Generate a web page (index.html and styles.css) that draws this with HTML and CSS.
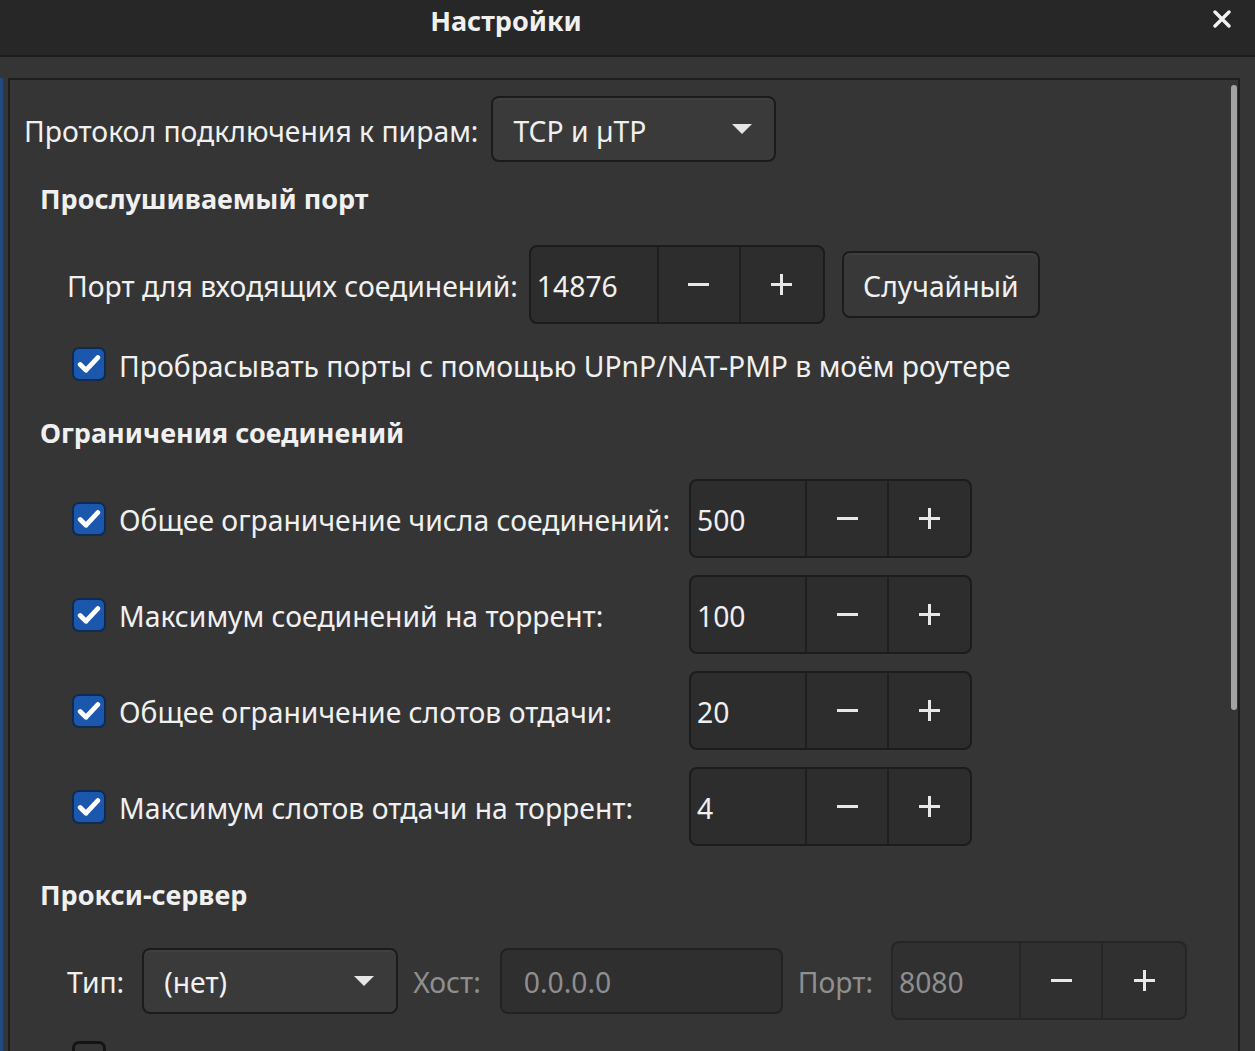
FILE: index.html
```html
<!DOCTYPE html>
<html lang="ru">
<head>
<meta charset="utf-8">
<title>Настройки</title>
<link rel="stylesheet" href="styles.css">
</head>
<body>
<div class="window">
  <header class="titlebar">
    <div class="title">Настройки</div>
    <button class="close" aria-label="Закрыть">
      <svg width="18" height="18" viewBox="0 0 18 18"><path d="M2 2 L16 16 M16 2 L2 16" stroke="#f2f2f2" stroke-width="3.4" stroke-linecap="round"/></svg>
    </button>
  </header>
  <div class="body">
    <div class="stripe"></div>
    <div class="frame">
      <div class="content">
        <div class="row r-proto">
          <span class="label">Протокол подключения к пирам:</span>
          <div class="combo combo-proto"><span>TCP и µTP</span><svg class="arrow" width="20" height="10" viewBox="0 0 20 10"><path d="M0 0 H20 L10 10 Z" fill="#e6e6e6"/></svg></div>
        </div>

        <h2 class="heading h1">Прослушиваемый порт</h2>

        <div class="row r-port">
          <span class="label">Порт для входящих соединений:</span>
          <div class="spin spin-wide">
            <span class="spin-entry">14876</span>
            <span class="spin-btn minus"><i class="ico-minus"></i></span>
            <span class="spin-btn plus"><i class="ico-plus"></i></span>
          </div>
          <button class="btn">Случайный</button>
        </div>

        <div class="row r-check">
          <span class="check on"><svg width="24" height="20" viewBox="0 0 24 20"><path d="M3.2 10.5 L9 16.2 L20.8 3.6" fill="none" stroke="#fff" stroke-width="4.8" stroke-linecap="round" stroke-linejoin="round"/></svg></span>
          <span class="label">Пробрасывать порты с помощью UPnP/NAT-PMP в моём роутере</span>
        </div>

        <h2 class="heading h2">Ограничения соединений</h2>

        <div class="limits">
          <div class="lrow">
            <span class="check on"><svg width="24" height="20" viewBox="0 0 24 20"><path d="M3.2 10.5 L9 16.2 L20.8 3.6" fill="none" stroke="#fff" stroke-width="4.8" stroke-linecap="round" stroke-linejoin="round"/></svg></span>
            <span class="label">Общее ограничение числа соединений:</span>
            <div class="spin spin-narrow">
              <span class="spin-entry">500</span>
              <span class="spin-btn minus"><i class="ico-minus"></i></span>
              <span class="spin-btn plus"><i class="ico-plus"></i></span>
            </div>
          </div>
          <div class="lrow">
            <span class="check on"><svg width="24" height="20" viewBox="0 0 24 20"><path d="M3.2 10.5 L9 16.2 L20.8 3.6" fill="none" stroke="#fff" stroke-width="4.8" stroke-linecap="round" stroke-linejoin="round"/></svg></span>
            <span class="label">Максимум соединений на торрент:</span>
            <div class="spin spin-narrow">
              <span class="spin-entry">100</span>
              <span class="spin-btn minus"><i class="ico-minus"></i></span>
              <span class="spin-btn plus"><i class="ico-plus"></i></span>
            </div>
          </div>
          <div class="lrow">
            <span class="check on"><svg width="24" height="20" viewBox="0 0 24 20"><path d="M3.2 10.5 L9 16.2 L20.8 3.6" fill="none" stroke="#fff" stroke-width="4.8" stroke-linecap="round" stroke-linejoin="round"/></svg></span>
            <span class="label">Общее ограничение слотов отдачи:</span>
            <div class="spin spin-narrow">
              <span class="spin-entry">20</span>
              <span class="spin-btn minus"><i class="ico-minus"></i></span>
              <span class="spin-btn plus"><i class="ico-plus"></i></span>
            </div>
          </div>
          <div class="lrow">
            <span class="check on"><svg width="24" height="20" viewBox="0 0 24 20"><path d="M3.2 10.5 L9 16.2 L20.8 3.6" fill="none" stroke="#fff" stroke-width="4.8" stroke-linecap="round" stroke-linejoin="round"/></svg></span>
            <span class="label">Максимум слотов отдачи на торрент:</span>
            <div class="spin spin-narrow">
              <span class="spin-entry">4</span>
              <span class="spin-btn minus"><i class="ico-minus"></i></span>
              <span class="spin-btn plus"><i class="ico-plus"></i></span>
            </div>
          </div>
        </div>

        <h2 class="heading h3">Прокси-сервер</h2>

        <div class="row r-proxy">
          <span class="label">Тип:</span>
          <div class="combo combo-type"><span>(нет)</span><svg class="arrow" width="20" height="10" viewBox="0 0 20 10"><path d="M0 0 H20 L10 10 Z" fill="#e6e6e6"/></svg></div>
          <span class="label dim">Хост:</span>
          <div class="entry dis">0.0.0.0</div>
          <span class="label dim">Порт:</span>
          <div class="spin spin-wide dis">
            <span class="spin-entry">8080</span>
            <span class="spin-btn minus"><i class="ico-minus"></i></span>
            <span class="spin-btn plus"><i class="ico-plus"></i></span>
          </div>
        </div>

        <div class="row r-auth">
          <span class="check off"></span>
          <span class="label dim">Использовать аутентификацию</span>
        </div>
      </div>
      <div class="scrollbar"></div>
    </div>
  </div>
</div>
</body>
</html>
```

FILE: styles.css
```css
* { box-sizing: border-box; }
html, body {
  margin: 0;
  padding: 0;
  width: 1255px;
  height: 1051px;
  overflow: hidden;
  background: #353535;
}
body {
  font-family: "Noto Sans", "Open Sans", sans-serif;
  color: #f0f0f0;
  font-size: 28.3px;
}
.window { display: flex; flex-direction: column; height: 1051px; }

.titlebar {
  position: relative;
  height: 57px;
  flex: none;
  background: #272727;
  border-bottom: 2px solid #1c1c1c;
  display: flex;
  align-items: center;
  justify-content: center;
  padding-right: 243px;
}
.title {
  font-weight: 700;
  font-size: 27px;
  color: #f0f0f0;
  margin-top: -14px;
}
.close {
  position: absolute;
  right: 24px;
  top: 10px;
  width: 18px;
  height: 18px;
  padding: 0;
  border: 0;
  background: none;
  display: flex;
}

.body {
  flex: 1;
  display: flex;
  padding-top: 21px;
  min-height: 0;
}
.stripe {
  width: 3px;
  flex: none;
  background: #1f4b80;
}
.frame {
  position: relative;
  margin-left: 5px;
  width: 1232px;
  flex: none;
  border: 2px solid #1e1e1e;
  border-bottom: 0;
  overflow: hidden;
}
.scrollbar {
  position: absolute;
  right: 1px;
  top: 5px;
  width: 6px;
  height: 625px;
  border-radius: 3px;
  background: #a3a3a3;
}
.content {
  padding: 16px 0 0 14px;
  display: flex;
  flex-direction: column;
  align-items: flex-start;
}
.row { display: flex; align-items: center; white-space: nowrap; }
.label { line-height: 40px; padding-top: 3px; }
.label.dim { color: #8f8f8f; }

.heading {
  margin: 0;
  font-size: 27px;
  font-weight: 700;
  line-height: 40px;
  margin-left: 16px;
  color: #f0f0f0;
}
.h1 { margin-top: 17px; }
.h2 { margin-top: 32px; }
.h3 { margin-top: 29px; }

.combo {
  height: 66px;
  background: #3a3a3a;
  border: 2px solid #1b1b1b;
  border-radius: 8px;
  display: flex;
  align-items: center;
  justify-content: space-between;
  padding: 3px 22px 0 20px;
  box-shadow: inset 0 2px 0 #404040;
}
.combo .arrow { margin-top: -3px; }
.combo-proto { width: 285px; margin-left: 13px; }
.combo-type { width: 256px; margin-left: 18px; }

.r-proto { height: 66px; }
.r-port { margin-top: 26px; margin-left: 43px; height: 79px; }
.r-port .spin { margin-left: 11px; }

.spin {
  height: 79px;
  display: flex;
  background: #2d2d2d;
  border: 2px solid #1c1c1c;
  border-radius: 8px;
}
.spin-entry {
  display: flex;
  align-items: center;
  padding: 3px 0 0 6px;
  border-right: 2px solid #1f1f1f;
}
.spin-btn {
  display: flex;
  align-items: center;
  justify-content: center;
}
.spin-btn.minus { width: 82px; border-right: 2px solid #1f1f1f; }
.spin-wide { width: 296px; }
.spin-wide .spin-entry { width: 128px; }
.spin-wide .spin-btn.plus { width: 82px; }
.spin-narrow { width: 283px; }
.spin-narrow .spin-entry { width: 116px; }
.spin-narrow .spin-btn.plus { width: 81px; }

.ico-minus {
  display: block;
  width: 21px;
  height: 3px;
  background: #e8e8e8;
}
.ico-plus {
  display: block;
  width: 21px;
  height: 21px;
  background:
    linear-gradient(#e8e8e8, #e8e8e8) center / 21px 3px no-repeat,
    linear-gradient(#e8e8e8, #e8e8e8) center / 3px 21px no-repeat;
}

.btn {
  margin-left: 17px;
  width: 198px;
  height: 67px;
  font: inherit;
  color: #f0f0f0;
  background: #383838;
  border: 2px solid #1b1b1b;
  border-radius: 8px;
  box-shadow: inset 0 2px 0 #3f3f3f;
  padding: 3px 0 0;
}

.check {
  width: 34px;
  height: 34px;
  flex: none;
  border-radius: 7px;
  display: flex;
  align-items: center;
  justify-content: center;
}
.check.on {
  background: #1b58ad;
  border: 2px solid #0f2b52;
}
.check.off {
  border: 3px solid #141414;
}
.r-check { margin-top: 23px; margin-left: 48px; height: 34px; }
.r-check .label { margin-left: 13px; }

.limits {
  margin-top: 26px;
  margin-left: 48px;
  display: flex;
  flex-direction: column;
  gap: 17px;
}
.lrow {
  display: grid;
  grid-template-columns: 34px 583px 283px;
  align-items: center;
  white-space: nowrap;
  height: 79px;
}
.lrow .label { margin-left: 13px; }

.r-proxy { margin-top: 26px; margin-left: 43px; height: 79px; }
.r-proxy .combo-type + .label { margin-left: 15px; }
.entry {
  margin-left: 19px;
  width: 283px;
  height: 66px;
  border: 2px solid #222222;
  border-radius: 8px;
  background: #2f2f2f;
  display: flex;
  align-items: center;
  padding: 3px 0 0 22px;
}
.entry.dis { color: #8e8e8e; }
.entry + .label { margin-left: 15px; }
.r-proxy .spin { margin-left: 18px; }
.spin.dis { background: #303030; border-color: #262626; }
.spin.dis .spin-entry { color: #8e8e8e; }
.spin.dis .spin-entry, .spin.dis .spin-btn.minus { border-right-color: #272727; }

.r-auth { margin-top: 21px; margin-left: 48px; height: 34px; align-items: flex-start; }
.r-auth .label { margin-left: 13px; }
```
